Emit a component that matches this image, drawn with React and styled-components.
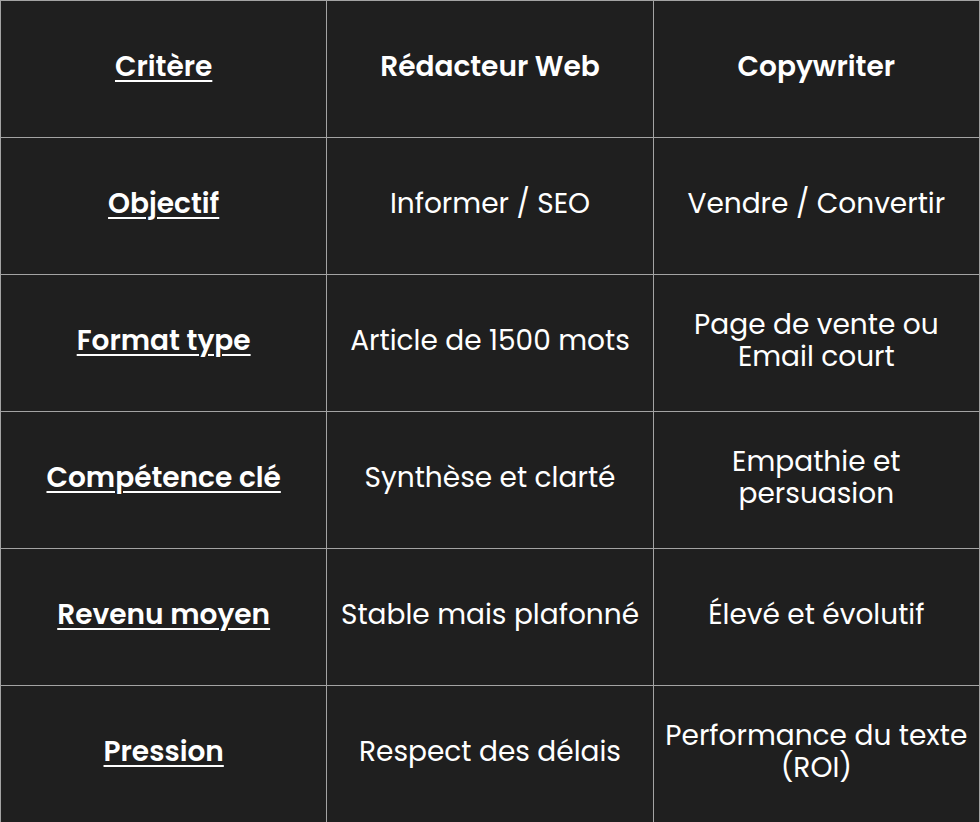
import React from "react";
import styled, { createGlobalStyle } from "styled-components";

const Global = createGlobalStyle`
  html, body { margin: 0; padding: 0; background: #1f1f1f; }
  body { font-family: "Poppins", "Inter", "Open Sans", sans-serif; }
`;

const Table = styled.table`
  width: 100%;
  height: 100vh;
  border-collapse: collapse;
  table-layout: fixed;
  background: #1f1f1f;
  color: #ffffff;
`;

const Row = styled.tr`
  height: calc(100vh / 6);
`;

const Cell = styled.td`
  border: 1px solid #a3a3a3;
  text-align: center;
  vertical-align: middle;
  padding: 0 10px 4px;
  font-size: 28px;
  line-height: 32px;
  font-weight: ${(p) => (p.$bold ? 600 : 400)};
  text-decoration: ${(p) => (p.$underline ? "underline" : "none")};
  text-decoration-thickness: 2px;
  text-underline-offset: 4px;
`;

const header = ["Critère", "Rédacteur Web", "Copywriter"];
const rows = [
  ["Objectif", "Informer / SEO", "Vendre / Convertir"],
  ["Format type", "Article de 1500 mots", "Page de vente ou Email court"],
  ["Compétence clé", "Synthèse et clarté", "Empathie et persuasion"],
  ["Revenu moyen", "Stable mais plafonné", "Élevé et évolutif"],
  ["Pression", "Respect des délais", "Performance du texte (ROI)"],
];

export default function App() {
  return (
    <>
      <Global />
      <Table>
        <tbody>
          <Row>
            <Cell as="th" $bold $underline>{header[0]}</Cell>
            <Cell as="th" $bold>{header[1]}</Cell>
            <Cell as="th" $bold>{header[2]}</Cell>
          </Row>
          {rows.map((r) => (
            <Row key={r[0]}>
              <Cell as="th" scope="row" $bold $underline>{r[0]}</Cell>
              <Cell>{r[1]}</Cell>
              <Cell>{r[2]}</Cell>
            </Row>
          ))}
        </tbody>
      </Table>
    </>
  );
}
